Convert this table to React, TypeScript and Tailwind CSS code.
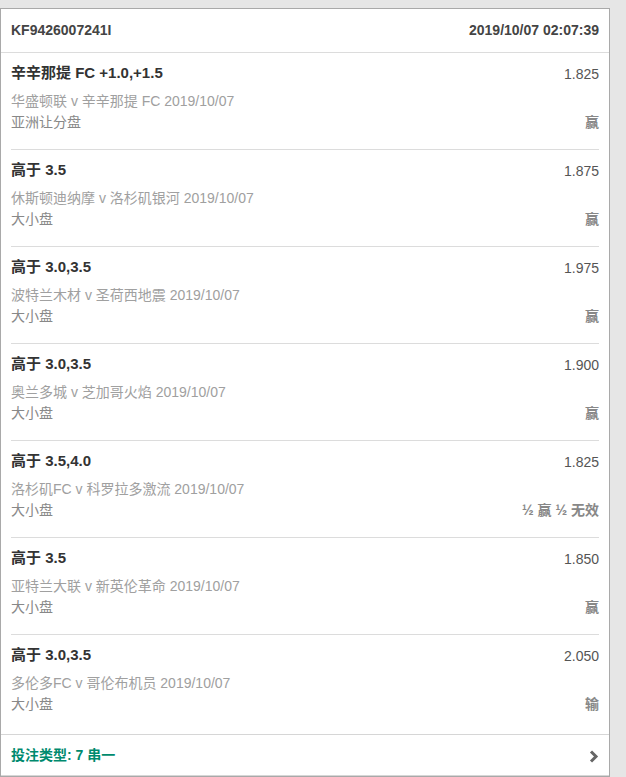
import React from "react";

const rows = [
  { title: "辛辛那提 FC +1.0,+1.5", odds: "1.825", match: "华盛顿联 v 辛辛那提 FC 2019/10/07", type: "亚洲让分盘", result: "赢" },
  { title: "高于 3.5", odds: "1.875", match: "休斯顿迪纳摩 v 洛杉矶银河 2019/10/07", type: "大小盘", result: "赢" },
  { title: "高于 3.0,3.5", odds: "1.975", match: "波特兰木材 v 圣荷西地震 2019/10/07", type: "大小盘", result: "赢" },
  { title: "高于 3.0,3.5", odds: "1.900", match: "奥兰多城 v 芝加哥火焰 2019/10/07", type: "大小盘", result: "赢" },
  { title: "高于 3.5,4.0", odds: "1.825", match: "洛杉矶FC v 科罗拉多激流 2019/10/07", type: "大小盘", result: "½ 赢 ½ 无效" },
  { title: "高于 3.5", odds: "1.850", match: "亚特兰大联 v 新英伦革命 2019/10/07", type: "大小盘", result: "赢" },
  { title: "高于 3.0,3.5", odds: "2.050", match: "多伦多FC v 哥伦布机员 2019/10/07", type: "大小盘", result: "输" },
];

export default function App() {
  return (
    <div
      className="min-h-[777px] w-[626px] bg-[#e6e6e6] pt-[8px]"
      style={{ fontFamily: '"Liberation Sans", Arial, "Noto Sans CJK SC", sans-serif' }}
    >
      <div className="w-[610px] border border-[#a9a9a9] bg-white min-h-[769px]">
        <div className="flex h-[44px] items-center justify-between border-b border-[#dcdcdc] px-[10px] text-[14px] font-bold text-[#444]">
          <span>KF9426007241I</span>
          <span>2019/10/07 02:07:39</span>
        </div>
        <div className="px-[10px]">
          {rows.map((r, i) => (
            <div
              key={i}
              className={
                i < rows.length - 1
                  ? "border-b border-[#dcdcdc] pt-[10px] pb-[16px]"
                  : "pt-[10px] pb-[19px]"
              }
            >
              <div className="flex h-[20px] items-center justify-between">
                <span className="text-[15px] font-bold text-[#333]">{r.title}</span>
                <span className="mt-[3px] text-[14px] text-[#555]">{r.odds}</span>
              </div>
              <div className="mt-[8px] flex h-[21px] items-center text-[14px] text-[#a0a0a0]">{r.match}</div>
              <div className="flex h-[21px] items-center justify-between text-[14px] text-[#888]">
                <span>{r.type}</span>
                <span className="font-bold text-[#888]">{r.result}</span>
              </div>
            </div>
          ))}
        </div>
        <div className="flex h-[42px] items-center justify-between border-y border-[#d6d6d6] px-[10px]">
          <span className="text-[14px] font-bold text-[#008a6e]">投注类型: 7 串一</span>
          <svg width="11" height="15" viewBox="0 0 11 15" className="mt-[2px]">
            <path d="M3 2.5 L8 7.5 L3 12.5" fill="none" stroke="#666" strokeWidth="3" />
          </svg>
        </div>
      </div>
    </div>
  );
}
